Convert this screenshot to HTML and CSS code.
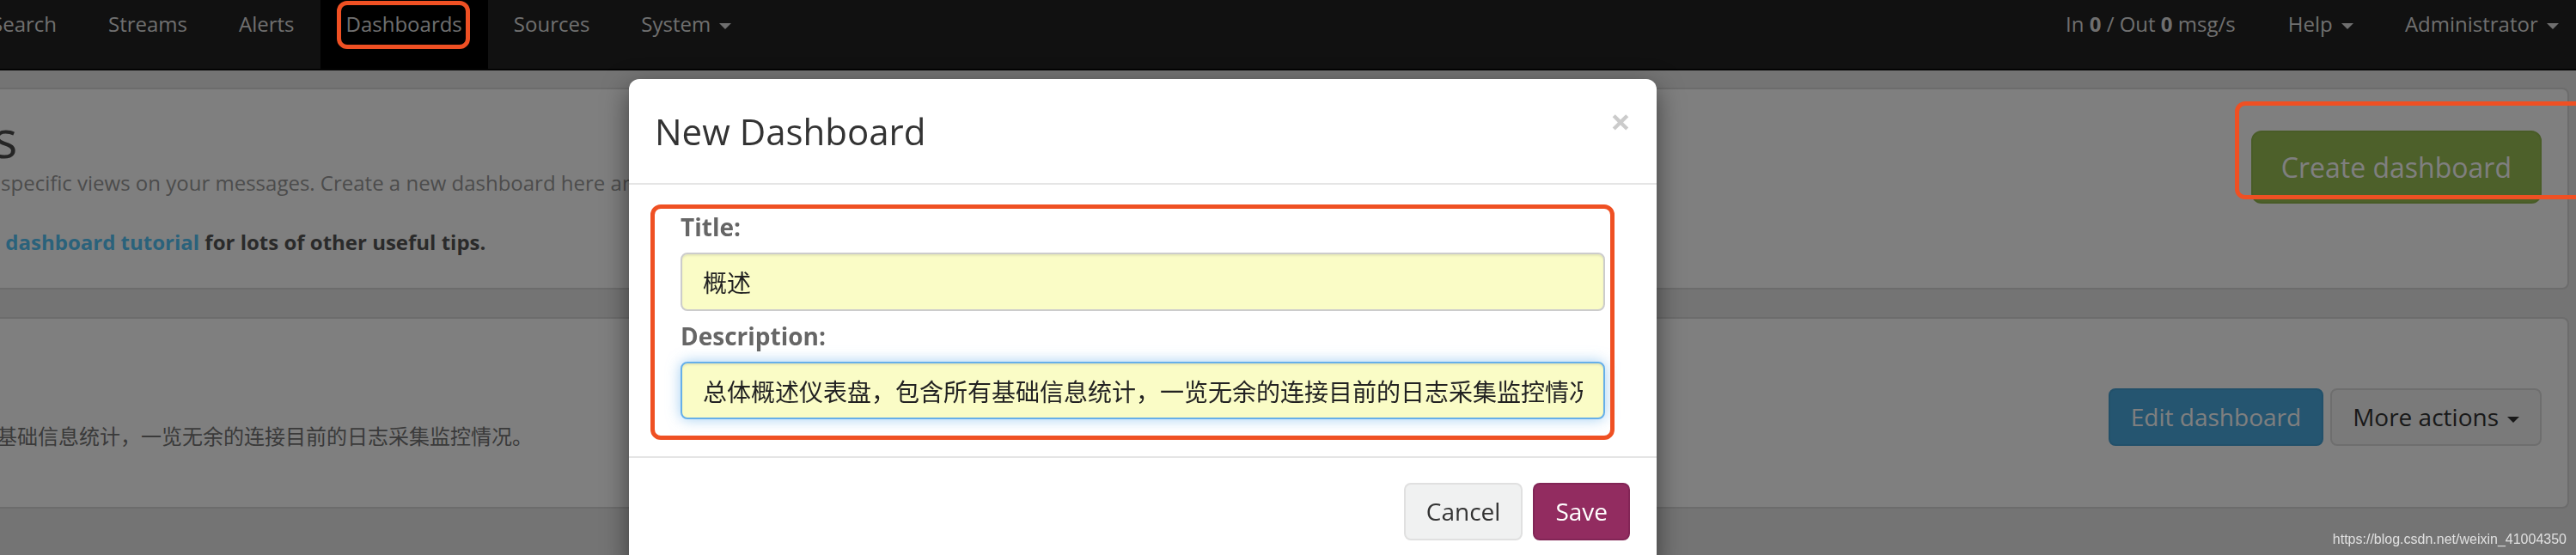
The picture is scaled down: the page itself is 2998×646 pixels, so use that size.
FILE: index.html
```html
<!DOCTYPE html>
<html lang="en">
<head>
    <meta charset="UTF-8">
    <title>Dashboards - Graylog</title>
    <link rel="stylesheet" href="styles.css">
</head>
<body>
    <nav class="navbar">
        <ul class="nav">
            <li><a href="#">Search</a></li>
            <li><a href="#">Streams</a></li>
            <li><a href="#">Alerts</a></li>
            <li class="active"><a href="#">Dashboards</a></li>
            <li><a href="#">Sources</a></li>
            <li><a href="#">System <span class="caret"></span></a></li>
        </ul>
        <ul class="nav">
            <li class="navbar-text">In <b>0</b> / Out <b>0</b> msg/s</li>
            <li><a href="#">Help <span class="caret"></span></a></li>
            <li><a href="#">Administrator <span class="caret"></span></a></li>
        </ul>
    </nav>

    <div class="page">
        <section class="content-box page-header">
            <div class="header-text">
                <h1>Dashboards</h1>
                <p class="description">Use dashboards to create specific views on your messages. Create a new dashboard here and add any graph or chart you create in other parts of Graylog with one click.</p>
                <p class="tips">Take a look at the <a href="#">dashboard tutorial</a> for lots of other useful tips.</p>
            </div>
            <div class="header-actions">
                <button class="btn btn-lg btn-success">Create dashboard</button>
            </div>
        </section>

        <section class="content-box dashboard-row">
            <div class="dashboard-text">
                <h2>概述</h2>
                <p>总体概述仪表盘，包含所有基础信息统计，一览无余的连接目前的日志采集监控情况。</p>
            </div>
            <div class="dashboard-actions">
                <button class="btn btn-info">Edit dashboard</button>
                <button class="btn btn-default">More actions<span class="caret"></span></button>
            </div>
        </section>

        <footer class="footer">Graylog 2.4.6+ceaa7e4 on graylog-server (Oracle Corporation 1.8.0_181 on Linux 3.10.0-862.el7.x86_64)</footer>
    </div>

    <div class="modal-backdrop"></div>

    <div class="modal">
        <div class="modal-header">
            <h2 class="modal-title">New Dashboard</h2>
            <button class="close">×</button>
        </div>
        <div class="modal-body">
            <div class="form-group">
                <label for="title">Title:</label>
                <input id="title" type="text" value="概述">
            </div>
            <div class="form-group">
                <label for="description">Description:</label>
                <input id="description" class="focused" type="text" value="总体概述仪表盘，包含所有基础信息统计，一览无余的连接目前的日志采集监控情况。">
            </div>
        </div>
        <div class="modal-footer">
            <button class="btn btn-cancel">Cancel</button>
            <button class="btn btn-save">Save</button>
        </div>
    </div>

    <!-- red marks drawn on top of the screenshot -->
    <div class="mark mark-nav"></div>
    <div class="mark mark-create"></div>
    <div class="mark mark-form"></div>

    <div class="watermark">https://blog.csdn.net/weixin_41004350</div>
</body>
</html>
```

FILE: styles.css
```css
html, body {
    margin: 0;
    height: 100%;
    overflow: hidden;
}

body {
    font-family: 'Open Sans', 'Noto Sans CJK SC', sans-serif;
    font-size: 24px;
    line-height: 34px;
    color: #555;
    background: #e8e8e8;
}

/* top navigation */
.navbar {
    display: flex;
    justify-content: space-between;
    height: 80px;
    margin: 0 -10px 0 -40px;
    background: #222;
    border-bottom: 2px solid #080808;
}

.nav {
    display: flex;
    margin: 0;
    padding: 0;
    list-style: none;
}

.nav a,
.navbar-text {
    display: block;
    height: 30px;
    padding: 13px 30px 37px;
    line-height: 30px;
    color: #dedede;
    text-decoration: none;
}

.navbar-text {
    padding-right: 31px;
}

.nav .active a {
    background: #000;
}

.caret {
    display: inline-block;
    width: 0;
    height: 0;
    margin-left: 4px;
    vertical-align: middle;
    border-top: 7px solid;
    border-left: 7px solid transparent;
    border-right: 7px solid transparent;
}

/* page content */
.page {
    margin: 20px 8px 0 -324px;
}

.content-box {
    display: flex;
    justify-content: space-between;
    background: #fff;
    border: 2px solid #d8d8d8;
    border-radius: 8px;
    padding: 24px 30px 36px;
    margin-bottom: 32px;
}

.header-text,
.dashboard-text {
    flex: 1;
    min-width: 0;
}

.page-header h1 {
    margin: 0 0 2px -26px;
    font-size: 60px;
    font-weight: 400;
    line-height: 66px;
    color: #4a4a4a;
}

.page-header .description {
    margin: 0 0 35px;
    color: #989898;
}

.page-header .tips {
    margin: 0 0 0 78px;
    font-weight: bold;
    color: #555;
}

.tips a {
    color: #54c4f6;
    text-decoration: none;
}

.header-actions {
    flex-shrink: 0;
    margin-top: 24px;
}

.dashboard-row {
    padding: 30px 30px 65px;
}

.dashboard-text h2 {
    margin: 0 0 30px;
    font-size: 32px;
    line-height: 60px;
    color: #333;
}

.dashboard-text p {
    margin: 0;
    color: #747474;
}

.dashboard-actions {
    display: flex;
    gap: 8px;
    flex-shrink: 0;
    margin-top: 51px;
    align-self: flex-start;
}

.footer {
    margin-top: -12px;
    text-align: center;
    font-size: 22px;
    color: #777;
}

/* buttons */
.btn {
    display: inline-block;
    padding: 12px 24px;
    font-family: inherit;
    font-size: 28px;
    line-height: 39px;
    border: 2px solid transparent;
    border-radius: 8px;
    cursor: pointer;
}

.btn-lg {
    padding: 19px 33px;
    font-size: 32px;
    line-height: 43px;
    border-radius: 12px;
}

.btn-success {
    background: #9ac054;
    border-color: #92b84e;
    color: #fff;
}

.btn-info {
    background: #4aaae0;
    border-color: #44a0d4;
    color: #fff;
}

.btn-default {
    background: #f4f4f4;
    border-color: #dcdcdc;
    color: #333;
}

.btn-default .caret {
    margin-left: 10px;
}

/* modal */
.modal-backdrop {
    position: fixed;
    inset: 0;
    background: rgba(0, 0, 0, 0.5);
    z-index: 10;
}

.modal {
    position: fixed;
    top: 92px;
    left: 732px;
    width: 1196px;
    background: #fff;
    border-radius: 12px;
    box-shadow: 0 10px 30px rgba(0, 0, 0, 0.5);
    z-index: 20;
}

.modal-header {
    display: flex;
    justify-content: space-between;
    align-items: flex-start;
    padding: 30px;
    border-bottom: 2px solid #e5e5e5;
}

.modal-title {
    margin: 0;
    font-size: 42px;
    font-weight: 400;
    line-height: 61px;
    color: #333;
}

.close {
    margin-top: -2px;
    padding: 0;
    background: none;
    border: 0;
    font-family: inherit;
    font-size: 42px;
    font-weight: bold;
    line-height: 1;
    color: #000;
    opacity: 0.2;
}

.modal-body {
    padding: 29px 60px 43px;
}

.form-group + .form-group {
    margin-top: 9px;
}

.form-group label {
    display: block;
    margin-bottom: 10px;
    font-size: 28px;
    font-weight: bold;
    line-height: 40px;
    color: #666;
}

.form-group input {
    display: block;
    box-sizing: border-box;
    width: 100%;
    height: 68px;
    padding: 0 24px;
    font-family: inherit;
    font-size: 28px;
    color: #222;
    background: #fafcc6;
    border: 2px solid #ccc;
    border-radius: 8px;
    box-shadow: inset 0 2px 2px rgba(0, 0, 0, 0.075);
    outline: none;
}

.form-group input.focused {
    height: 67px;
    border-color: #66afe9;
    box-shadow: inset 0 2px 2px rgba(0, 0, 0, 0.075), 0 0 16px rgba(102, 175, 233, 0.6);
}

.modal-footer {
    display: flex;
    justify-content: flex-end;
    gap: 12px;
    padding: 29px 31px 30px;
    border-top: 2px solid #e5e5e5;
}

.btn-cancel {
    background: #f0f1f1;
    border-color: #e0e0e0;
    color: #333;
}

.btn-save {
    background: #922c60;
    border-color: #822556;
    color: #fff;
}

/* annotations on top of the picture */
.mark {
    position: absolute;
    box-sizing: border-box;
    border: 5px solid #ef5023;
    border-radius: 12px;
    z-index: 30;
}

.mark-nav {
    left: 392px;
    top: 1px;
    width: 155px;
    height: 56px;
}

.mark-create {
    left: 2601px;
    top: 118px;
    width: 500px;
    height: 114px;
}

.mark-form {
    left: 757px;
    top: 238px;
    width: 1122px;
    height: 274px;
}

.watermark {
    position: absolute;
    right: 11px;
    top: 619px;
    font-family: 'Liberation Sans', sans-serif;
    font-size: 16px;
    line-height: 18px;
    color: #e0e0e0;
    z-index: 30;
}
```
